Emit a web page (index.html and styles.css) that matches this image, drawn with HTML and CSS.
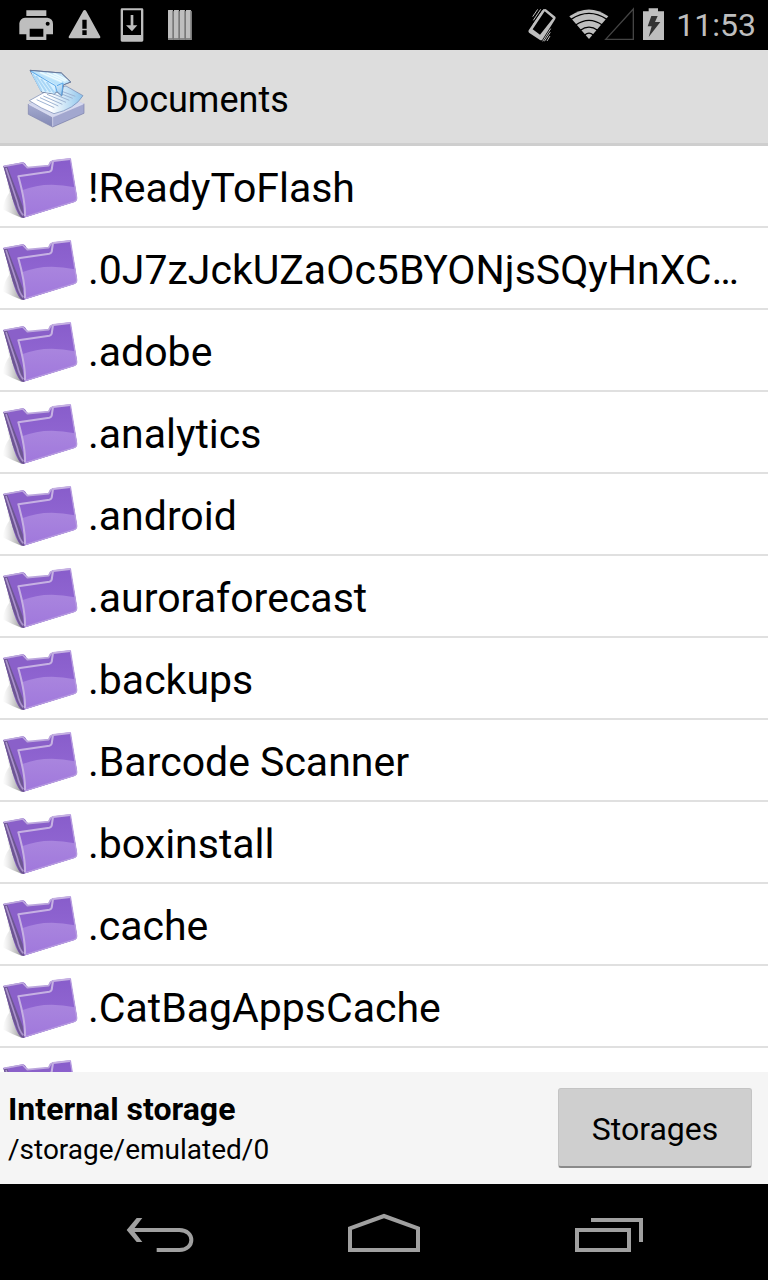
FILE: index.html
```html
<!DOCTYPE html>
<html lang="en">
<head>
<meta charset="utf-8">
<meta name="viewport" content="width=device-width, initial-scale=1">
<title>Documents</title>
<link rel="stylesheet" href="styles.css">
</head>
<body>
<svg class="defs" aria-hidden="true">
  <defs>
    <linearGradient id="front" x1="0" y1="0" x2="0" y2="1"><stop offset="0" stop-color="#885dcb"/><stop offset="1" stop-color="#966cd6"/></linearGradient>
    <linearGradient id="shine" x1="0" y1="0" x2="0" y2="1"><stop offset="0" stop-color="#a985de"/><stop offset="1" stop-color="#a078dc"/></linearGradient>
    <linearGradient id="shade" x1="1" y1="0" x2="0" y2="0"><stop offset="0" stop-color="#777" stop-opacity=".8"/><stop offset="1" stop-color="#bbb" stop-opacity="0"/></linearGradient>
    <symbol id="folder" viewBox="0 0 240 240">
      <path d="M20 105L66 216Q34 204 8 190Q12 160 28 140Z" fill="url(#shade)"/>
      <path d="M10 60L68 49Q75 49 80 60L87 65L146 58L150 48L160 43L211 37L231 155Q232 164 222 168L76 214Q66 219 58 208Q46 192 38 160Z" fill="#8a60c9"/>
      <path d="M10 60L22 62L68 180L73 216Q62 217 55 202L38 160Z" fill="#6d5692"/>
      <path d="M18 66L52 168Q58 196 70 208" fill="none" stroke="#aa91cc" stroke-width="5"/>
      <path d="M54 91L151 76Q157 74 157 65L160 45L211 38L231 153Q232 164 222 168L76 213Q76 170 54 91Z" fill="url(#front)"/>
      <path d="M66 133Q135 105 224 124L230 153Q232 164 222 168L76 213Q76 174 66 133Z" fill="url(#shine)"/>
      <path d="M75 211Q77 170 55 91L148 77Q156 75 156 65L159 45L211 39" fill="none" stroke="#c6b1e3" stroke-width="6" stroke-linejoin="round"/>
      <path d="M11 61L68 51L82 65L146 59L152 48L160 44" fill="none" stroke="#bca7dd" stroke-width="5" stroke-linejoin="round"/>
      <path d="M211 38L230 155Q231 164 222 167L76 212" fill="none" stroke="#b79ce0" stroke-width="4"/>
    </symbol>
  </defs>
</svg>

<header class="status">
  <div class="status-group notices">
    <svg class="glyph" viewBox="0 0 105 150" width="35" height="50" role="img" aria-label="Printing"><path d="M22 31H82V48H22ZM18 53H85Q102 55 102 72V103H82V120H22V103H1V70Q3 55 18 53ZM32 86V110H73V86Z" fill-rule="evenodd"/><circle cx="86" cy="71" r="6" fill="#000"/></svg>
    <svg class="glyph" viewBox="0 0 99 150" width="33" height="50" role="img" aria-label="Warning"><path d="M50 30Q53 30 55 34L97 110Q98 115 93 115H6Q1 115 2 110L45 34Q47 30 50 30ZM43 59V86H56V59ZM43 91V105H56V91Z" fill-rule="evenodd"/></svg>
    <svg class="glyph" viewBox="0 0 72 150" width="24" height="50" role="img" aria-label="Download"><path d="M6 25H66Q70 25 70 29V121Q70 125 66 125H6Q2 125 2 121V29Q2 25 6 25ZM9 31V105H63V31Z" fill-rule="evenodd"/><path d="M32 45H40V76H52L36 94L18 76H32Z"/></svg>
    <svg class="glyph" viewBox="0 0 72 150" width="24" height="50" role="img" aria-label="Bars"><path d="M1 30H14L17 35V120H0V31ZM19 30H32L35 35V120H18V31ZM37 30H50L53 35V120H36V31ZM55 30H68L71 35V120H54V31Z"/><path d="M15 33V117H0M33 33V117H18M51 33V117H36M69 33V117H54" fill="none" stroke="#777" stroke-width="4"/></svg>
  </div>
  <div class="status-group">
    <svg class="glyph" viewBox="45 0 90 150" width="30" height="50" role="img" aria-label="Vibrate"><path d="M96 28Q99 26 102 28L130 50Q132 53 130 57L91 119Q88 122 84 120L51 98Q48 95 50 91L90 32ZM98 34L62 88L84 104L123 55Z" fill-rule="evenodd"/><path d="M62 50L77 28M64 61L86 28M64 73L95 28M92 124L116 86M97 124L115 97M105 123L114 108" stroke="#bebebe" stroke-width="3"/></svg>
    <svg class="glyph signal" viewBox="174 0 198 150" width="66" height="50" role="img" aria-label="Wi-Fi"><path d="M234 117L175 49Q234 8 292 49Z"/><path d="M180 58Q234 22 288 58M194 75Q234 47 274 75M208 91Q234 72 260 91M221 105Q234 94 247 105" fill="none" stroke="#000" stroke-width="4"/><path d="M284 118L367 27V118Z" fill="none" stroke="#444" stroke-width="4"/></svg>
    <svg class="glyph battery" viewBox="396 0 69 150" width="23" height="50" role="img" aria-label="Charging"><path d="M416 25H444V34H462V120H399V34H416Z"/><path d="M424 48H443L435 66H451L416 111L425 79H413Z" fill="#333"/></svg>
    <time class="clock">11:53</time>
  </div>
</header>

<div class="titlebar">
  <svg class="logo" viewBox="0 0 210 216" width="70" height="72" aria-hidden="true">
    <defs>
      <linearGradient id="tray" x1="0" y1="0" x2="0" y2="1"><stop offset="0" stop-color="#b8bdde"/><stop offset="1" stop-color="#8389b5"/></linearGradient>
      <linearGradient id="sheet" x1="0" y1="0" x2="1" y2="0"><stop offset=".4" stop-color="#fff"/><stop offset="1" stop-color="#8ec5ec"/></linearGradient>
      <linearGradient id="wing" x1="0" y1="0" x2="1" y2="1"><stop offset="0" stop-color="#79b9f2"/><stop offset=".45" stop-color="#edfaff"/><stop offset="1" stop-color="#7fb8e8"/></linearGradient>
    </defs>
    <path d="M25 132L100 95L192 131V160L98 201L25 163Z" fill="url(#tray)"/>
    <path d="M25 132L98 171L192 131L122 100Z" fill="#d5d9ef"/>
    <path d="M98 171L192 131V159L98 200Z" fill="#a2a7cf"/>
    <path d="M25 132L98 171L192 131M98 171V200" fill="none" stroke="#e7e9f8" stroke-width="2"/>
    <path d="M25 132V163L98 201L192 160V131" fill="none" stroke="#7e84ac" stroke-width="2"/>
    <path d="M28 122Q55 107 91 87L138 78L189 107Q164 147 102 161Q62 145 28 122Z" fill="url(#sheet)" stroke="#7083b0" stroke-width="2"/>
    <path d="M50 119L103 143M60 113L115 138M70 108L127 133M81 103L138 127M91 98L148 121M102 93L158 115M115 90L166 109" stroke="#9eb4d3" stroke-width="3"/>
    <path d="M30 31L65 96L103 102L111 95L125 108L130 77L134 72L152 66L124 39Z" fill="url(#wing)" stroke="#687a9d" stroke-width="3"/>
    <path d="M32 33L106 76L103 101L66 95Z" fill="#d8f1ff"/>
    <path d="M38 42L65 93M48 48L78 94M63 57L91 96M80 66L103 99" stroke="#a9d6f6" stroke-width="6"/>
    <path d="M34 33L128 59L151 66L132 73L111 76Z" fill="#b9e2fb"/>
    <path d="M34 32L123 40L150 65L128 71Z" fill="#c4e6fb"/>
    <path d="M60 37L125 65M80 38L137 64M100 40L143 61" stroke="#e9faff" stroke-width="5"/>
    <path d="M33 34L106 77L111 95M111 77L129 69L125 107" fill="none" stroke="#5ca9ea" stroke-width="3"/>
    <path d="M30 31L124 39L152 66L130 75" fill="none" stroke="#687a9d" stroke-width="3"/>
  </svg>
  <h1 class="title">Documents</h1>
</div>

<main class="list-wrap">
  <ul class="list">
    <li><a class="row" href="#"><svg class="folder"><use href="#folder"/></svg><span class="name">!ReadyToFlash</span></a></li>
    <li><a class="row" href="#"><svg class="folder"><use href="#folder"/></svg><span class="name">.0J7zJckUZaOc5BYONjsSQyHnXC…</span></a></li>
    <li><a class="row" href="#"><svg class="folder"><use href="#folder"/></svg><span class="name">.adobe</span></a></li>
    <li><a class="row" href="#"><svg class="folder"><use href="#folder"/></svg><span class="name">.analytics</span></a></li>
    <li><a class="row" href="#"><svg class="folder"><use href="#folder"/></svg><span class="name">.android</span></a></li>
    <li><a class="row" href="#"><svg class="folder"><use href="#folder"/></svg><span class="name">.auroraforecast</span></a></li>
    <li><a class="row" href="#"><svg class="folder"><use href="#folder"/></svg><span class="name">.backups</span></a></li>
    <li><a class="row" href="#"><svg class="folder"><use href="#folder"/></svg><span class="name">.Barcode Scanner</span></a></li>
    <li><a class="row" href="#"><svg class="folder"><use href="#folder"/></svg><span class="name">.boxinstall</span></a></li>
    <li><a class="row" href="#"><svg class="folder"><use href="#folder"/></svg><span class="name">.cache</span></a></li>
    <li><a class="row" href="#"><svg class="folder"><use href="#folder"/></svg><span class="name">.CatBagAppsCache</span></a></li>
    <li><a class="row" href="#"><svg class="folder"><use href="#folder"/></svg></a></li>
  </ul>
</main>

<footer class="storage">
  <div class="location">
    <strong class="volume">Internal storage</strong>
    <span class="path">/storage/emulated/0</span>
  </div>
  <button class="storages" type="button">Storages</button>
</footer>

<nav class="navbar">
  <button class="nav-button" type="button" aria-label="Back"><svg viewBox="78 0 204 270" width="68" height="90"><path d="M97 120H238C286 120 286 180 238 180H170" fill="none" stroke="#a0a0a0" stroke-width="12"/><path d="M110 84H127L99 120L127 156H110L80 120Z" fill="#a0a0a0"/></svg></button>
  <button class="nav-button" type="button" aria-label="Home"><svg viewBox="744 0 216 270" width="72" height="90"><path d="M750 115L852 78L954 115V180H750Z" fill="none" stroke="#a0a0a0" stroke-width="12"/></svg></button>
  <button class="nav-button" type="button" aria-label="Recent apps"><svg viewBox="42 0 210 270" width="70" height="90"><path d="M54 120H210V180H54ZM96 90H246V156" fill="none" stroke="#a0a0a0" stroke-width="12"/></svg></button>
</nav>
</body>
</html>
```
FILE: styles.css
```css
* { box-sizing: border-box; }

body {
  margin: 0;
  height: 100vh;
  display: flex;
  flex-direction: column;
  overflow: hidden;
  background: #fff;
  color: #000;
  font-family: Roboto, sans-serif;
}

svg { display: block; flex: none; }
.defs { position: absolute; width: 0; height: 0; }

.status {
  flex: none;
  display: flex;
  justify-content: space-between;
  height: 50px;
  padding: 0 12px 0 19px;
  background: #000;
  color: #bebebe;
}
.status-group { display: flex; align-items: center; }
.notices { gap: 14px; }
.notices .glyph:nth-child(3) { margin: 0 10px 0 5px; }
.glyph { fill: #bebebe; }
.signal { margin-left: 12px; }
.battery { margin: 0 11px 0 7px; }
.clock { font-size: 32px; line-height: 50px; }

.titlebar {
  flex: none;
  display: flex;
  align-items: center;
  gap: 15px;
  height: 96px;
  padding: 0 0 2px 20px;
  background: #ddd;
  border-bottom: 3px solid #cecece;
}
.title { margin: 0; padding-top: 8px; font-size: 36px; font-weight: 400; line-height: 44px; }

.list-wrap { flex: 1; min-height: 0; overflow: hidden; }
.list { margin: 0; padding: 0; list-style: none; }
.row {
  display: flex;
  align-items: center;
  gap: 8px;
  height: 82px;
  padding-right: 16px;
  border-bottom: 2px solid #e0e0e0;
  color: #000;
  text-decoration: none;
}
.folder { width: 80px; height: 80px; }
.name { padding-top: 4px; font-size: 41px; line-height: 50px; white-space: nowrap; }

.storage {
  flex: none;
  display: flex;
  align-items: center;
  justify-content: space-between;
  height: 112px;
  padding: 0 16px 0 8px;
  background: #f5f5f5;
}
.location { display: flex; flex-direction: column; padding-top: 2px; }
.volume { font-size: 32px; line-height: 42px; }
.path { font-size: 28px; line-height: 40px; }
.storages {
  width: 194px;
  height: 80px;
  padding: 2px 0 0;
  border: 1px solid #c4c4c4;
  border-bottom: 2px solid #8a8a8a;
  border-radius: 3px;
  background: #cfcfcf;
  color: #000;
  font: 32px Roboto, sans-serif;
}

.navbar {
  flex: none;
  display: grid;
  grid-template-columns: repeat(3, 1fr);
  height: 96px;
  padding: 6px 48px 0;
  background: #000;
}
.nav-button {
  display: flex;
  justify-content: center;
  padding: 0;
  border: 0;
  background: none;
}
```
